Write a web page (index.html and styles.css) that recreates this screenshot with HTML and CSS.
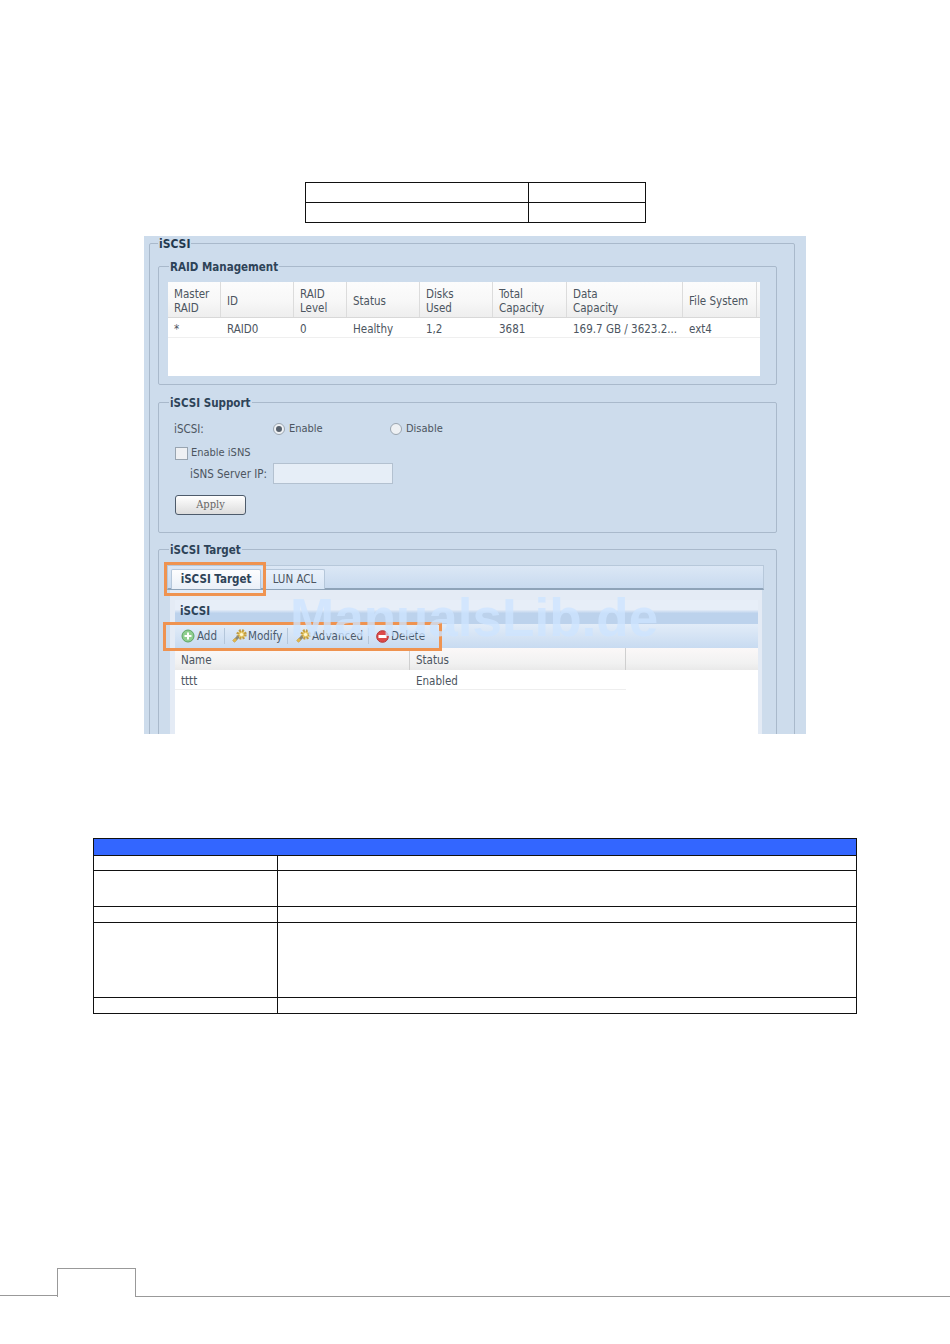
FILE: index.html
```html
<!DOCTYPE html>
<html>
<head>
  <meta charset="utf-8">
  <title>iSCSI</title>
  <link rel="stylesheet" href="styles.css">
</head>
<body>
<div class="page">
  <table class="top-table">
    <colgroup><col class="tt-a"><col></colgroup>
    <tr><td></td><td></td></tr>
    <tr><td></td><td></td></tr>
  </table>

  <div class="shot">
    <fieldset class="box outer">
      <legend class="outer-title">iSCSI</legend>

      <fieldset class="box">
        <legend>RAID Management</legend>
        <div class="raid">
          <div class="raid-row raid-head">
            <div>Master<br>RAID</div>
            <div>ID</div>
            <div>RAID<br>Level</div>
            <div>Status</div>
            <div>Disks<br>Used</div>
            <div>Total<br>Capacity</div>
            <div>Data<br>Capacity</div>
            <div>File System</div>
          </div>
          <div class="raid-row raid-body">
            <div>*</div>
            <div>RAID0</div>
            <div>0</div>
            <div>Healthy</div>
            <div>1,2</div>
            <div>3681</div>
            <div>169.7 GB / 3623.2...</div>
            <div>ext4</div>
          </div>
        </div>
      </fieldset>

      <fieldset class="box support">
        <legend>iSCSI Support</legend>
        <div class="f-row f-radio">
          <span class="f-label">iSCSI:</span>
          <span class="opt"><i class="radio on"></i>Enable</span>
          <span class="opt"><i class="radio"></i>Disable</span>
        </div>
        <div class="f-row f-check"><i class="check"></i>Enable iSNS</div>
        <div class="f-row f-ip">
          <span class="ip-label">iSNS Server IP:</span>
          <span class="ip-input"></span>
        </div>
        <div class="apply">Apply</div>
      </fieldset>

      <fieldset class="box target">
        <legend>iSCSI Target</legend>
        <div class="tabs">
          <div class="tab active">iSCSI Target</div>
          <div class="tab">LUN ACL</div>
        </div>
        <div class="tab-body">
          <div class="list-title">iSCSI</div>
          <div class="toolbar">
            <span class="tool t-add">
              <svg width="14" height="14" viewBox="0 0 14 14"><circle cx="7" cy="7" r="6" fill="#8fce8f" stroke="#5ea565"/><path d="M7 3.5v7M3.5 7h7" stroke="#fff" stroke-width="2"/></svg>Add
            </span>
            <span class="tool t-mod">
              <svg width="15" height="14" viewBox="0 0 15 14"><circle cx="9.5" cy="5.5" r="3.8" fill="#ecd070" stroke="#c29c42" stroke-width="2.8" stroke-dasharray="1.8 1.2"/><circle cx="9.5" cy="5.5" r="1.6" fill="#fff6d0"/><path d="M1.5 12.5l5-5" stroke="#8d8a74" stroke-width="3"/><path d="M1.5 12.5l2.5-2.5" stroke="#e2b64a" stroke-width="3"/></svg>Modify
            </span>
            <span class="tool t-adv">
              <svg width="15" height="14" viewBox="0 0 15 14"><circle cx="9.5" cy="5.5" r="3.8" fill="#ecd070" stroke="#c29c42" stroke-width="2.8" stroke-dasharray="1.8 1.2"/><circle cx="9.5" cy="5.5" r="1.6" fill="#fff6d0"/><path d="M1.5 12.5l5-5" stroke="#8d8a74" stroke-width="3"/><path d="M1.5 12.5l2.5-2.5" stroke="#e2b64a" stroke-width="3"/></svg>Advanced
            </span>
            <span class="tool t-del">
              <svg width="13" height="13" viewBox="0 0 13 13"><circle cx="6.5" cy="6.5" r="5.8" fill="#dd4a4a" stroke="#b53232"/><rect x="2.5" y="5" width="8" height="3" fill="#fff"/></svg>Delete
            </span>
          </div>
          <div class="list-row list-head"><div>Name</div><div>Status</div><div></div></div>
          <div class="list-row list-body"><div>tttt</div><div>Enabled</div><div class="blank"></div></div>
        </div>
      </fieldset>
    </fieldset>

    <div class="mark mark-tab"></div>
    <div class="mark mark-tools"></div>
    <div class="watermark">ManualsLib.de</div>
  </div>

  <table class="info-table">
    <colgroup><col class="col-a"><col></colgroup>
    <tr><th colspan="2"></th></tr>
    <tr class="r15"><td></td><td></td></tr>
    <tr class="r36"><td></td><td></td></tr>
    <tr class="r16"><td></td><td></td></tr>
    <tr class="r75"><td></td><td></td></tr>
    <tr class="r16"><td></td><td></td></tr>
  </table>

  <div class="footer">
    <div class="foot-line left"></div>
    <div class="foot-tab"></div>
    <div class="foot-line"></div>
  </div>
</div>
</body>
</html>
```

FILE: styles.css
```css
html, body {margin:0; padding:0; background:#fff;}
.page {width:950px; height:1344px; display:flex; flex-direction:column; align-items:center; overflow:hidden; font-family:"DejaVu Sans Condensed","DejaVu Sans",sans-serif; font-stretch:condensed;}

/* blank tables */
table {border-collapse:collapse; table-layout:fixed;}
td, th {border:1.5px solid #111; padding:0;}
.top-table {width:341px; margin:182px 0 0 0;}
.top-table tr {height:20px;}
.tt-a {width:223px;}

.info-table {width:764px; margin-top:104px;}
.info-table th {height:16px; background:#3366ff;}
.col-a {width:184px;}
.r15 {height:15px;}
.r16 {height:16px;}
.r36 {height:36px;}
.r75 {height:75px;}

/* the screenshot */
.shot {position:relative; width:662px; height:498px; margin-top:13px; padding:0 5px; box-sizing:border-box; background:#cddcec; overflow:hidden; font-size:11.5px; color:#4c5560; line-height:14px; white-space:nowrap;}

.box {margin:9px 0 0 0; padding:9px 16px 8px 9px; border:1px solid #a9b9cb; border-radius:2px; min-width:0;}
.box legend {margin-left:1px; padding:0 1px; height:14px; font-weight:bold; font-size:11.5px; line-height:16px; color:#2e4358;}
.outer {margin:0; width:646px; box-sizing:border-box; padding:9px 17px 0 8px; height:600px;}
.outer > legend {margin-left:0; font-size:12px; color:#23384e;}
.outer > .box:first-of-type {margin-top:0;}

.raid {height:94px; background:#fff;}
.raid-row {display:grid; grid-template-columns:53px 73px 53px 73px 73px 74px 116px 74px 3px;}
.raid-row > div {padding:2px 0 0 6px; display:flex; align-items:center; overflow:hidden;}
.raid-head {height:36px; box-sizing:border-box; background:linear-gradient(#fcfcfc,#f8f8f8 50%,#eeeeee); border-bottom:1px solid #d8d8d8;}
.raid-head > div {border-right:1px solid #dcdcdc;}
.raid-body {height:20px; box-sizing:border-box; border-bottom:1px solid #efefef;}

.support {height:128px; margin-top:10px; padding:0 0 8px 0;}
.support legend {margin-left:10px;}
.f-row {display:flex; align-items:center; padding-left:15px;}
.f-radio {height:20px; margin-top:10px;}
.f-label {width:99px;}
.opt {display:flex; align-items:center; width:117px; font-size:11px;}
.radio {width:10px; height:10px; margin-right:4px; border:1px solid #9aa5b0; border-radius:50%; background:#eef1f4; position:relative;}
.radio.on::after {content:""; position:absolute; left:2px; top:2px; width:6px; height:6px; border-radius:50%; background:#56606c;}
.f-check {height:14px; margin-top:7px; padding-left:16px; font-size:11px;}
.check {width:11px; height:11px; margin-right:3px; border:1px solid #98a4b0; background:#eef0f3;}
.f-ip {height:21px; margin-top:3px; padding-left:31px;}
.ip-label {width:83px;}
.ip-input {width:118px; height:19px; border:1px solid #b3c1d0; background:#e6eef7;}
.apply {width:69px; height:18px; margin:11px 0 0 16px; border:1px solid #4d5b6b; border-radius:3px; background:linear-gradient(#fff,#dcdcdc); text-align:center; line-height:18px; font-family:"DejaVu Serif",serif; font-size:11px; color:#666;}

.target {padding:9px 0 0 8px; height:300px;}
.target legend {margin-left:2px;}
.tabs {width:597px; height:25px; box-sizing:border-box; padding:3px 0 0 3px; display:flex; gap:3px; background:linear-gradient(#dbe7f5,#c8daef); border:1px solid #b7c8da; border-bottom:2px solid #8ea3b8;}
.tab {height:20px; box-sizing:border-box; padding:0 6px; line-height:19px; background:linear-gradient(#e9f1fb,#d8e6f6); border:1px solid #b5c7da; border-bottom:0; border-radius:2px 2px 0 0;}
.tab.active {width:90px; padding:0; text-align:center; font-weight:bold; color:#2e4358; background:linear-gradient(#fdfdfe,#eaf0f8);}
.tab:last-child {width:61px; padding:0; text-align:center;}
.tab-body {width:592px; height:170px; margin-left:3px; box-sizing:border-box; padding:10px 4px 0 5px; background:#e4ebf5;}
.list-title {height:24px; box-sizing:border-box; padding:4px 0 0 5px; font-weight:bold; font-size:11.5px; color:#2e4358; background:linear-gradient(#e7eef8,#e7eef8 40%,#bcd2ec 55%,#bcd2ec);}
.toolbar {height:24px; display:flex; align-items:center; padding-left:6px; background:linear-gradient(#e2ecf8,#c8dbf1); color:#4a5a6c;}
.tool {display:flex; align-items:center; gap:2px; box-sizing:border-box; height:16px; border-right:1px solid #b4c6da;}
.t-add {width:44px;}
.t-mod {width:63px; padding-left:7px; gap:1px;}
.t-adv {width:81px; padding-left:8px; gap:1px;}
.t-del {border:0; padding-left:7px;}
.list-row {display:grid; grid-template-columns:235px 216px 1fr; background:#fff;}
.list-row > div {padding:2px 0 0 6px; box-sizing:border-box; display:flex; align-items:center;}
.list-head {height:22px; background:linear-gradient(#fbf8f8,#f1f1f1 70%,#e9e9e9);}
.list-head > div:nth-child(-n+2) {border-right:1px solid #cfcfcf;}
.list-body {height:20px;}
.list-body > div {border-bottom:1px solid #eee;}
.list-body > .blank {border-bottom:0;}
.tab-body::after {content:""; display:block; height:80px; background:#fff;}

/* orange marks and watermark over the screenshot */
.mark {position:absolute; box-sizing:border-box; border:3px solid #ef9350;}
.mark-tab {left:20px; top:326px; width:102px; height:34px;}
.mark-tools {left:19px; top:386px; width:279px; height:29px;}
.watermark {position:absolute; left:146px; top:354px; font-family:"Liberation Sans",sans-serif; font-stretch:normal; font-weight:bold; font-size:53px; line-height:56px; color:rgba(205,228,255,.78);}

/* page number tab */
.footer {width:950px; height:29px; margin-top:254px; display:flex; align-items:flex-end;}
.foot-line {flex:1; border-bottom:1px solid #999;}
.foot-line.left {flex:none; width:57px; margin-bottom:1px;}
.foot-tab {width:77px; height:28px; border:1px solid #999; border-bottom:0;}
```
